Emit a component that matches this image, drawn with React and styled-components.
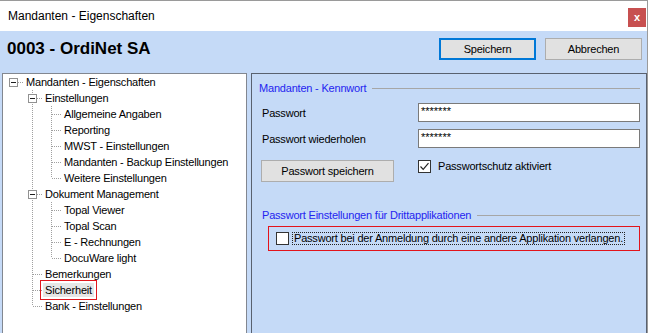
import React from 'react';
import styled, { createGlobalStyle } from 'styled-components';

const BLUE = '#c5daf7';

const GlobalStyle = createGlobalStyle`
  html, body { margin: 0; padding: 0; background: #ffffff; }
  body {
    font-family: "Liberation Sans", Arial, sans-serif;
    font-size: 11px;
    color: #000;
  }
  * { box-sizing: border-box; }
`;

const Window = styled.div`
  width: 648px;
  height: 333px;
  border-top: 1px solid #9a9a9a;
  border-right: 1px solid #9a9a9a;
  background: ${BLUE};
  display: flex;
  flex-direction: column;
  overflow: hidden;
`;

const TitleBar = styled.div`
  height: 30px;
  flex: none;
  background: #ffffff;
  display: flex;
  align-items: flex-start;
  justify-content: space-between;
  padding-left: 8px;
`;

const TitleText = styled.span`
  font-size: 12px;
  line-height: 14px;
  margin-top: 8px;
`;

const CloseButton = styled.div`
  width: 18px;
  height: 19px;
  margin-top: 7px;
  margin-right: 1px;
  background: #c75050;
  color: #ffffff;
  font-weight: bold;
  font-size: 11px;
  display: flex;
  align-items: center;
  justify-content: center;
  padding-bottom: 2px;
`;

const Header = styled.div`
  height: 42px;
  flex: none;
  display: flex;
  align-items: flex-start;
  padding: 0 5px 0 7px;
`;

const HeaderTitle = styled.h1`
  margin: 8px 0 0 0;
  font-size: 17px;
  line-height: 20px;
  font-weight: bold;
`;

const ButtonGroup = styled.div`
  margin-left: auto;
  margin-top: 7px;
  display: flex;
  gap: 9px;
`;

const DialogButton = styled.button`
  width: ${p => p.$width || 97}px;
  height: 22px;
  padding: 0;
  background: #e1e1e1;
  border: ${p => (p.$primary ? '2px solid #0078d7' : '1px solid #adadad')};
  font-family: "Liberation Sans", Arial, sans-serif;
  font-size: 11px;
  letter-spacing: -0.2px;
  color: #000;
  border-radius: 0;
`;

const Body = styled.div`
  flex: 1;
  min-height: 0;
  display: flex;
  padding-left: 2px;
  gap: 4px;
`;

const TreePanel = styled.div`
  width: 245px;
  flex: none;
  background: #ffffff;
  border: 1px solid #828790;
  border-bottom: none;
  padding-left: 1px;
  letter-spacing: -0.2px;
`;

const TreeRow = styled.div`
  height: 16px;
  display: flex;
  align-items: center;
`;

const TreeCell = styled.svg`
  width: 19px;
  height: 16px;
  flex: none;
  display: block;
`;

const TreeLabel = styled.span`
  margin-left: 1px;
  padding: 0 2px;
  line-height: 14px;
  white-space: nowrap;
  background: ${p => (p.$selected ? '#e6e6e6' : 'transparent')};
  outline: ${p => (p.$selected ? '1px solid #e0161d' : 'none')};
  outline-offset: 2px;
`;

const RightPanel = styled.div`
  width: 396px;
  flex: none;
  border: 1px solid #59616f;
  border-bottom: none;
  padding: 7px 6px 0 7px;
  display: flex;
  flex-direction: column;
  letter-spacing: -0.2px;
`;

const GroupTitleRow = styled.div`
  height: 14px;
  display: flex;
  align-items: center;
  padding-left: ${p => p.$indent || 0}px;
  margin-top: ${p => p.$top || 0}px;
`;

const GroupTitle = styled.span`
  color: #2424f0;
  line-height: 14px;
  white-space: nowrap;
`;

const GroupLine = styled.div`
  flex: 1;
  height: 1px;
  margin-left: 6px;
  background: #a6a6a6;
`;

const FormGrid = styled.div`
  display: grid;
  grid-template-columns: 156px 1fr;
  row-gap: 7px;
  align-items: center;
  margin-top: 8px;
  padding-left: 3px;
`;

const FieldLabel = styled.span`
  line-height: 14px;
`;

const PasswordField = styled.div`
  height: 19px;
  background: #ffffff;
  border: 1px solid #7a7a7a;
  padding: 1px 2px;
  font-size: 11px;
  line-height: 13px;
  letter-spacing: 0;
`;

const ActionButton = styled(DialogButton)`
  margin-left: -1px;
  margin-top: 5px;
  align-self: start;
`;

const CheckRow = styled.label`
  display: flex;
  align-items: center;
  gap: 7px;
  align-self: start;
  margin-top: 5px;
  line-height: 13px;
`;

const CheckBox = styled.span`
  width: 13px;
  height: 13px;
  flex: none;
  background: #ffffff;
  border: 1px solid #333333;
  display: flex;
  align-items: center;
  justify-content: center;
`;

const AlertBox = styled.div`
  margin: 4px 0 0 9px;
  height: 25px;
  border: 1px solid #e3141b;
  display: flex;
  align-items: center;
  padding-left: 7px;
  gap: 3px;
`;

const FocusLabel = styled.span`
  border: 1px dotted #222;
  padding: 0 1px;
  height: 13px;
  line-height: 11px;
  white-space: nowrap;
`;

const treeItems = [
  { label: 'Mandanten - Eigenschaften', level: 0, guides: [], hasNext: false, expander: true },
  { label: 'Einstellungen', level: 1, guides: [false], hasNext: true, expander: true },
  { label: 'Allgemeine Angaben', level: 2, guides: [false, true], hasNext: true },
  { label: 'Reporting', level: 2, guides: [false, true], hasNext: true },
  { label: 'MWST - Einstellungen', level: 2, guides: [false, true], hasNext: true },
  { label: 'Mandanten - Backup Einstellungen', level: 2, guides: [false, true], hasNext: true },
  { label: 'Weitere Einstellungen', level: 2, guides: [false, true], hasNext: false },
  { label: 'Dokument Management', level: 1, guides: [false], hasNext: true, expander: true },
  { label: 'Topal Viewer', level: 2, guides: [false, true], hasNext: true },
  { label: 'Topal Scan', level: 2, guides: [false, true], hasNext: true },
  { label: 'E - Rechnungen', level: 2, guides: [false, true], hasNext: true },
  { label: 'DocuWare light', level: 2, guides: [false, true], hasNext: false },
  { label: 'Bemerkungen', level: 1, guides: [false], hasNext: true },
  { label: 'Sicherheit', level: 1, guides: [false], hasNext: true, selected: true },
  { label: 'Bank - Einstellungen', level: 1, guides: [false], hasNext: false },
];

const DOT = '#a0a0a0';

function GuideCell({ line }) {
  return (
    <TreeCell viewBox="0 0 19 16" shapeRendering="crispEdges">
      {line && <line x1="9.5" y1="0" x2="9.5" y2="16" stroke={DOT} strokeDasharray="1 1" />}
    </TreeCell>
  );
}

function ConnectorCell({ level, hasNext, expander }) {
  return (
    <TreeCell viewBox="0 0 19 16" shapeRendering="crispEdges">
      {level > 0 && <line x1="9.5" y1="0" x2="9.5" y2="8" stroke={DOT} strokeDasharray="1 1" />}
      {hasNext && <line x1="9.5" y1="8" x2="9.5" y2="16" stroke={DOT} strokeDasharray="1 1" />}
      <line x1="10" y1="8.5" x2="19" y2="8.5" stroke={DOT} strokeDasharray="1 1" />
      {expander && (
        <g>
          <rect x="5.5" y="4.5" width="8" height="8" fill="#ffffff" stroke="#919191" />
          <line x1="7" y1="8.5" x2="12" y2="8.5" stroke="#1e1e1e" />
        </g>
      )}
    </TreeCell>
  );
}

function TreeItem({ item }) {
  return (
    <TreeRow>
      {item.guides.map((g, i) => (
        <GuideCell key={i} line={g} />
      ))}
      <ConnectorCell level={item.level} hasNext={item.hasNext} expander={item.expander} />
      <TreeLabel $selected={item.selected}>{item.label}</TreeLabel>
    </TreeRow>
  );
}

function Check({ checked }) {
  return (
    <CheckBox>
      {checked && (
        <svg width="11" height="11" viewBox="0 0 11 11">
          <path d="M1.5 5.5 L4.2 8.3 L9.5 2.2" fill="none" stroke="#222" strokeWidth="1.2" />
        </svg>
      )}
    </CheckBox>
  );
}

export default function App() {
  return (
    <>
      <GlobalStyle />
      <Window>
        <TitleBar>
          <TitleText>Mandanten - Eigenschaften</TitleText>
          <CloseButton>x</CloseButton>
        </TitleBar>
        <Header>
          <HeaderTitle>0003 - OrdiNet SA</HeaderTitle>
          <ButtonGroup>
            <DialogButton $primary>Speichern</DialogButton>
            <DialogButton>Abbrechen</DialogButton>
          </ButtonGroup>
        </Header>
        <Body>
          <TreePanel>
            {treeItems.map(item => (
              <TreeItem key={item.label} item={item} />
            ))}
          </TreePanel>
          <RightPanel>
            <GroupTitleRow>
              <GroupTitle>Mandanten - Kennwort</GroupTitle>
              <GroupLine />
            </GroupTitleRow>
            <FormGrid>
              <FieldLabel>Passwort</FieldLabel>
              <PasswordField>*******</PasswordField>
              <FieldLabel>Passwort wiederholen</FieldLabel>
              <PasswordField>*******</PasswordField>
              <ActionButton $width={133}>Passwort speichern</ActionButton>
              <CheckRow>
                <Check checked />
                Passwortschutz aktiviert
              </CheckRow>
            </FormGrid>
            <GroupTitleRow $indent={3} $top={26}>
              <GroupTitle>Passwort Einstellungen für Drittapplikationen</GroupTitle>
              <GroupLine />
            </GroupTitleRow>
            <AlertBox>
              <Check />
              <FocusLabel>Passwort bei der Anmeldung durch eine andere Applikation verlangen.</FocusLabel>
            </AlertBox>
          </RightPanel>
        </Body>
      </Window>
    </>
  );
}
